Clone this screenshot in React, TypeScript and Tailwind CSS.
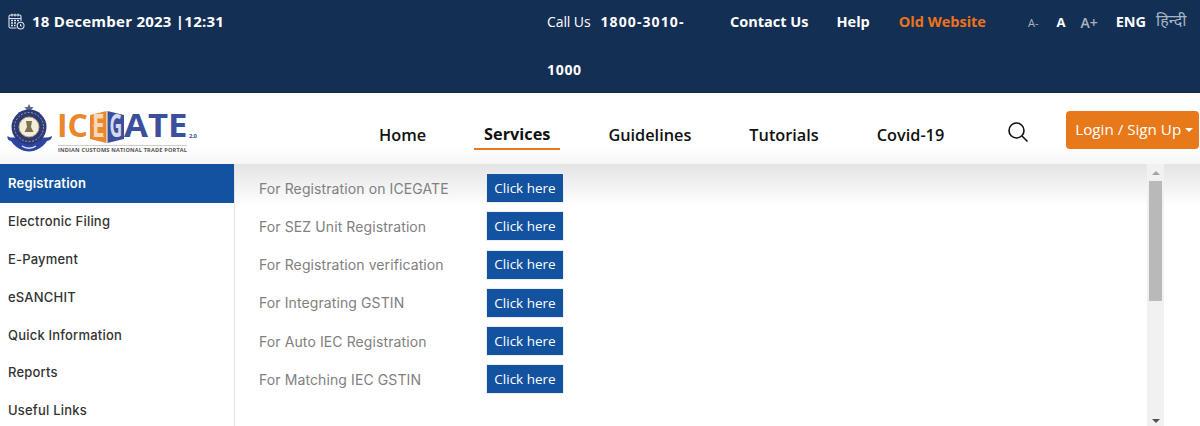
const sideItems = ["Electronic Filing", "E-Payment", "eSANCHIT", "Quick Information", "Reports", "Useful Links"];
const rows = ["For Registration on ICEGATE", "For SEZ Unit Registration", "For Registration verification", "For Integrating GSTIN", "For Auto IEC Registration", "For Matching IEC GSTIN"];
const nav = ["Home", "Services", "Guidelines", "Tutorials", "Covid-19"];

function CalendarIcon() {
  return (
    <svg width="17" height="17" viewBox="0 0 17 17" fill="none" stroke="#dfe6ee" strokeWidth="1.1" className="shrink-0">
      <path d="M8.5 15H2.5A1.5 1.5 0 0 1 1 13.5V3.5A1.5 1.5 0 0 1 2.5 2h9A1.5 1.5 0 0 1 13 3.5V8" />
      <path d="M4 .8v2.7M7 .8v2.7M10 .8v2.7M1 5.5h12" />
      <path d="M3 7.5h2M6 7.5h2M9 7.5h2M3 10h2M6 10h2M3 12.5h2M6 12.5h1.5" strokeWidth="1.3" />
      <circle cx="12.6" cy="12.6" r="3.4" />
      <path d="M12.6 11v1.7l1 .6" />
    </svg>
  );
}

function Logo() {
  const sans = "'Open Sans', sans-serif";
  return (
    <svg width="200" height="56" viewBox="0 0 200 56" className="shrink-0" role="img" aria-label="ICEGATE 2.0">
      <path d="M29 3l1.5 3 3.3.3-2.5 2.2.7 3.2-3-1.6-3 1.6.7-3.2-2.5-2.2 3.3-.3z" fill="#5d6a80" />
      <path d="M7.5 35c-.5 3 1 4.500 3.500 5 4 6 11 10.500 18 10.500S43 46 47 40c2.500-.5 5-2 5-5-2 1-4 1.500-6 1.500H12c-2 0-3-.5-4.500-1.500z" fill="#2c45a0" />
      <circle cx="29" cy="26" r="17.500" fill="#2b3a7c" />
      <circle cx="29" cy="26" r="14.500" fill="none" stroke="#a9a477" strokeWidth="1" strokeDasharray="2 1.500" />
      <circle cx="29" cy="26" r="10" fill="#f2eedb" stroke="#c2ae5a" strokeWidth="1" />
      <path d="M26 20h6l-1 6 2.500 5h-9l2.500-5z" fill="#7c7350" />
      <path d="M22 45c4 3 10 3 14 0" fill="none" stroke="#dfe4f2" strokeWidth="1.300" />

      <path d="M90 14l16.500-4v32l-16.500-4z" fill="#e8872c" />
      <path d="M107.500 10l16.500 4v24l-16.500 4z" fill="#3c4f9c" />
      <path d="M93 16l10 2M94 33l10 3M92 24l4 3M100 12l3 5" stroke="#f7cfa6" strokeWidth=".7" fill="none" />

      <g fontFamily={sans} fontWeight="700">
        <text x="57" y="36" fontSize="32" fill="#e8872c" textLength="31" lengthAdjust="spacingAndGlyphs">IC</text>
        <text transform="translate(92 36) scale(.7 1)" fontSize="32" fill="#f9d9b8">E</text>
        <text transform="translate(109.500 36) scale(.55 1)" fontSize="32" fill="#d5daee">G</text>
        <text x="124" y="36" fontSize="32" fill="#3c4f9c" textLength="63.500" lengthAdjust="spacingAndGlyphs">ATE</text>
        <text x="189" y="37" fontSize="6" fill="#3c4f9c" textLength="8">2.0</text>
        <text x="58" y="51" fontSize="5.600" fill="#555" textLength="129">INDIAN CUSTOMS NATIONAL TRADE PORTAL</text>
      </g>
      <path d="M58 44.500h129" stroke="#cfcfcf" strokeWidth="1" />
    </svg>
  );
}

export default function App() {
  return (
    <div className="h-[426px] w-[1200px] overflow-hidden bg-white font-['Open_Sans',sans-serif]">
      <header className="flex h-[93px] bg-[#142f54] text-white">
        <div className="flex h-[43px] w-[530px] items-center gap-[7px] pl-[8px] text-[15px] font-bold tracking-[0.25px]">
          <CalendarIcon />
          <span>18 December 2023 |12:31</span>
        </div>
        <div className="w-[170px] pl-[17px] text-[14px]">
          <div className="whitespace-nowrap leading-[43px]">
            <span className="tracking-[-0.1px]">Call Us</span>
            <span className="ml-[10px] font-bold tracking-[1.1px]">1800-3010-</span>
          </div>
          <div className="mt-[3px] font-bold tracking-[0.7px] leading-[48px]">1000</div>
        </div>
        <div className="flex h-[43px] items-center pl-[30px] text-[14.5px] font-bold">
          <span>Contact Us</span>
          <span className="ml-[28px]">Help</span>
          <span className="ml-[29px] text-[#ee7318]">Old Website</span>
          <span className="ml-[42px] mt-[4px] text-[11px] font-normal text-[#a9b4c2]">A-</span>
          <span className="ml-[18px] mt-[2px] text-[13px]">A</span>
          <span className="ml-[15px] mt-[2px] text-[14px] font-semibold text-[#a9b4c2]">A+</span>
          <span className="ml-[18px]">ENG</span>
          <span className="ml-[10px] mt-[-4px] font-['Noto_Sans','DejaVu_Sans',sans-serif] text-[16px] font-normal text-[#a9b4c2]">हिन्दी</span>
        </div>
      </header>

      <nav className="relative z-10 flex h-[71px] items-center bg-gradient-to-b from-white via-white via-[75%] to-[#f6f6f6]">
        <Logo />
        <div className="ml-[179px] mt-[14px] flex shrink-0 gap-[58px] whitespace-nowrap text-[16.3px] font-semibold text-[#111]">
          {nav.map((item) => (
            <span key={item} className={item === "Services" ? "relative top-[-1px] font-bold" : ""}>
              {item}
              {item === "Services" && <span className="absolute left-[-10px] right-[-10px] top-[26px] h-[2px] bg-[#e87a1d]" />}
            </span>
          ))}
        </div>
        <svg width="24" height="24" viewBox="0 0 24 24" fill="none" stroke="#111" strokeWidth="1.6" className="ml-[62px] mt-[6px] shrink-0">
          <circle cx="10.500" cy="10.500" r="7.500" />
          <path d="M16 16l5.500 5.500" />
        </svg>
        <button className="ml-[36px] mt-[2px] flex h-[38px] w-[133px] shrink-0 items-center whitespace-nowrap rounded-[4px] bg-[#e8791a] pl-[9px] text-[15.2px] text-white">
          Login / Sign Up
          <span className="ml-[4px] h-0 w-0 border-x-[4px] border-t-[4px] border-x-transparent border-t-white" />
        </button>
      </nav>

      <div className="flex h-[262px]">
        <aside className="w-[235px] shrink-0 border-r border-[#dfe3e8] font-['Inter',sans-serif] text-[13px] font-medium tracking-[0.2px] text-[#333]">
          <div className="flex h-[39px] items-center bg-[#13529f] pl-[8px] font-semibold text-white">Registration</div>
          <ul>
            {sideItems.map((item) => (
              <li key={item} className="flex h-[37.8px] items-center pl-[8px]">{item}</li>
            ))}
          </ul>
        </aside>
        <main className="relative flex-1 bg-gradient-to-b from-[#e4e4e4] via-white via-[16%] to-white">
          <div className="flex flex-col gap-[8.3px] pl-[24px] pt-[9px] font-['Inter',sans-serif]">
            {rows.map((row) => (
              <div key={row} className="flex h-[30px] items-center">
                <span className="w-[227px] text-[14px] tracking-[0.1px] text-[#808080]">{row}</span>
                <button className="h-full w-[78px] border border-[#e8eef6] bg-[#13529f] font-['Open_Sans',sans-serif] text-[13.5px] text-white">Click here</button>
              </div>
            ))}
          </div>
          <div className="absolute right-[36px] top-0 flex h-full w-[17px] flex-col items-center justify-between bg-[#f1f1f1]">
            <div className="flex w-full flex-col items-center">
              <span className="mt-[7px] h-0 w-0 border-x-[4px] border-b-[4px] border-x-transparent border-b-[#a3a3a3]" />
              <span className="mt-[6px] h-[120px] w-[13px] bg-[#b9b9b9]" />
            </div>
            <span className="mb-[3px] h-0 w-0 border-x-[4px] border-t-[4px] border-x-transparent border-t-[#505050]" />
          </div>
        </main>
      </div>
    </div>
  );
}
